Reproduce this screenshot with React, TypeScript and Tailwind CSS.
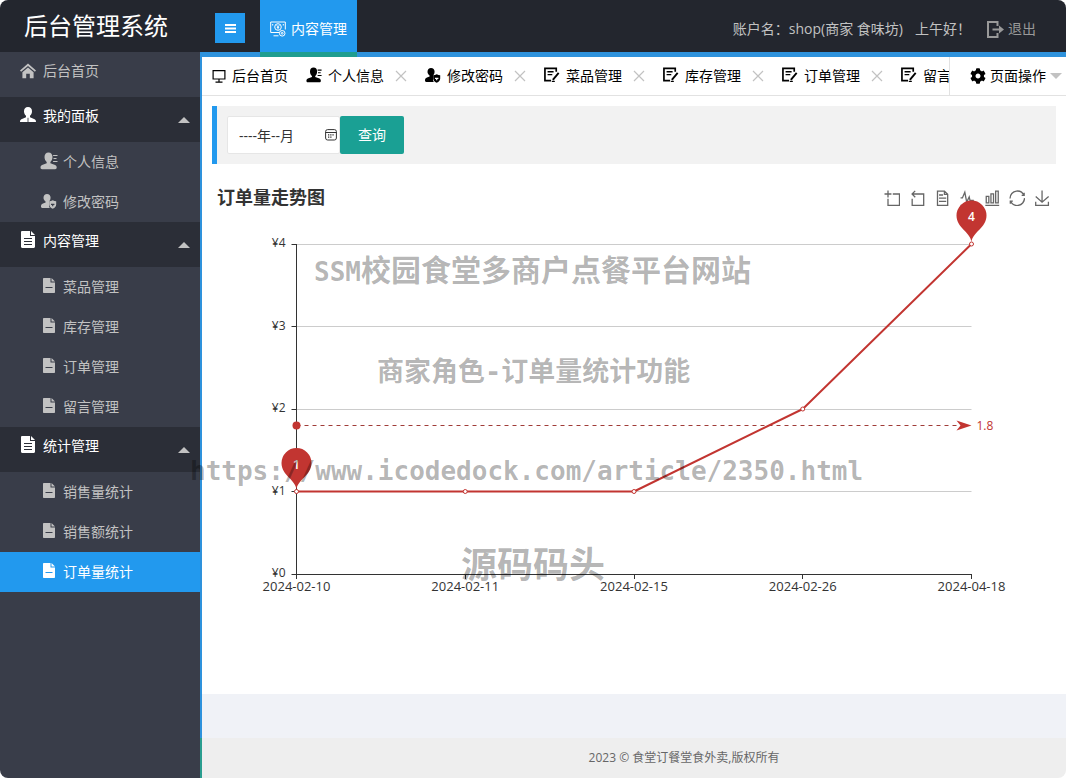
import React from 'react'
import { FaCog } from 'react-icons/fa'

type IconProps = { className?: string }

/* ---------- icons ---------- */

const HomeIcon = ({ className }: IconProps) => (
  <svg viewBox="0 0 16 16" className={className} fill="currentColor" aria-hidden="true">
    <path d="M8 0.6 16 7.6 14.9 8.8 8 2.9 1.1 8.8 0 7.6Z" />
    <path d="M2.4 9.2 8 4.4l5.6 4.8v6H9.8v-4.4H6.2v4.4H2.4z" />
  </svg>
)

const UserIcon = ({ className }: IconProps) => (
  <svg viewBox="0 0 16 16" className={className} fill="currentColor" aria-hidden="true">
    <path d="M8 0c2.6 0 4 1.8 4 4.2 0 2-.9 3.6-2 4.6v1.4l4.6 2c1 .5 1.4 1.2 1.4 2.8H0c0-1.6.4-2.3 1.4-2.8L6 10.2V8.8c-1.1-1-2-2.600-2-4.600C4 1.800 5.400 0 8 0z" />
    <path d="M8 10.800v4.200" stroke="#2b2e37" strokeWidth="0.8" />
  </svg>
)

const ProfileIcon = ({ className }: IconProps) => (
  <svg viewBox="0 0 17 18" className={className} fill="currentColor" aria-hidden="true">
    <path d="M8 0.500c2.500 0 4 1.800 4 4.500 0 2.300-1 4-2.100 5v1.200l4.700 1.700c1.200.500 1.600 1.300 1.600 2.600 0 1.200-.6 1.700-1.600 1.700H1.600C.6 17.200 0 16.700 0 15.500c0-1.300.4-2.100 1.600-2.600l4.600-1.700V10C5 9 4 7.300 4 5 4 2.300 5.500.500 8 .500z" />
    <path d="M12.600 3.500H17M13 6.500h3M12.600 9.500H17" stroke="currentColor" strokeWidth="1.200" />
  </svg>
)

const PasswordIcon = ({ className }: IconProps) => (
  <svg viewBox="0 0 16 16" className={className} fill="currentColor" aria-hidden="true">
    <path d="M6 1c2.200 0 3.600 1.600 3.600 3.800 0 1.300-.4 2.400-1.100 3.200L8 9v4c0 .8.400 1.500.9 2H1.300C.4 15 0 14.500 0 13.600c0-1.800.7-2.500 2-3l2.600-1.100V8.400C3.300 7.600 2.500 6.400 2.500 4.800 2.500 2.600 3.900 1 6 1z" />
    <path
      fillRule="evenodd"
      d="M11.700 7.200c1.200.8 2.300 1.100 3.500 1.100v3.200c0 1.900-1.300 3.200-3.500 4.200-2.200-1-3.500-2.300-3.500-4.200V8.300c1.200 0 2.300-.3 3.500-1.100zm-1.700 3.500v1.300h1.100v1.300h1.200V12h1.100v-1.300z"
    />
  </svg>
)

const FileIcon = ({ className }: IconProps) => (
  <svg viewBox="0 0 14 17" className={className} aria-hidden="true">
    <path fill="currentColor" d="M0 1.200C0 .5.500 0 1.200 0H9v5h5v10.800c0 .7-.5 1.200-1.200 1.200H1.200C.5 17 0 16.500 0 15.800z" />
    <path fill="currentColor" d="M10 0l4 4h-4z" />
    <path d="M3 7.500h8M3 10.500h8M3 13.500h8" stroke="#2b2e37" strokeWidth="1" />
  </svg>
)

const PageIcon = ({ className, line }: IconProps & { line: string }) => (
  <svg viewBox="0 0 12 15" className={className} aria-hidden="true">
    <path fill="currentColor" d="M0 1c0-.6.4-1 1-1h6.500v4.500H12V14c0 .6-.4 1-1 1H1c-.6 0-1-.4-1-1z" />
    <path fill="currentColor" d="M8.500 0 12 3.500H8.500z" />
    <path d="M2.500 9.500h7" stroke={line} strokeWidth="1" />
  </svg>
)

const MonitorIcon = ({ className }: IconProps) => (
  <svg viewBox="0 0 14 14" className={className} fill="none" stroke="currentColor" strokeWidth="1.200" aria-hidden="true">
    <path d="M1.100 1.600h11.800v8.400H1.100zM7 10v3M3.500 13.200h7" />
  </svg>
)

const NoteIcon = ({ className }: IconProps) => (
  <svg viewBox="0 0 17 16" className={className} fill="none" stroke="currentColor" aria-hidden="true">
    <path d="M13 4.500V1H1v13h6.500" strokeWidth="1.800" />
    <path d="M3.800 4.600h6.400M3.800 7.600h5" strokeWidth="1.500" />
    <path d="M15.600 5.800 9.400 13.200" strokeWidth="2" />
    <path d="M8.300 14.800h3.200" strokeWidth="1.300" />
  </svg>
)

const CashIcon = ({ className }: IconProps) => (
  <svg viewBox="0 0 16 16" className={className} fill="none" stroke="currentColor" strokeWidth="1" aria-hidden="true">
    <path d="M9 11.500H.7V1h14.600v7.500" />
    <circle cx="8" cy="6" r="3.300" />
    <path d="M6.700 4.200 8 5.800l1.300-1.600M8 5.800v2.600M6.800 6.300h2.400M2.700 3v1.500M13.300 3v1.500M3.500 14.800h5" />
    <circle cx="12.200" cy="12.300" r="2.800" />
    <circle cx="12.200" cy="12.300" r="0.900" />
  </svg>
)

const ExitIcon = ({ className }: IconProps) => (
  <svg viewBox="0 0 17 17" className={className} fill="none" stroke="currentColor" aria-hidden="true">
    <path d="M10.500 5V1H1v15h9.500v-4" strokeWidth="2" />
    <path d="M5.500 8.500H14" strokeWidth="2" />
    <path d="M12 4.500l5 4-5 4z" fill="currentColor" stroke="none" />
  </svg>
)

const CloseIcon = ({ className }: IconProps) => (
  <svg viewBox="0 0 12 12" className={className} stroke="#c2c2c2" strokeWidth="1.200" aria-hidden="true">
    <path d="M1 1l10 10M11 1 1 11" />
  </svg>
)

const CalendarIcon = ({ className }: IconProps) => (
  <svg viewBox="0 0 12 12" className={className} fill="none" stroke="#333" aria-hidden="true">
    <rect x="0.600" y="0.600" width="10.800" height="10.400" rx="2" />
    <path d="M.6 3.500h10.800" />
    <path d="M3 5.900h6M3 8.200h4" strokeWidth="1.300" strokeDasharray="1.300 .9" />
  </svg>
)

/* ---------- data ---------- */

type MenuItem = { label: string; icon: 'profile' | 'password' | 'page' }

const menu: { title: string; icon: 'user' | 'file'; items: MenuItem[] }[] = [
  {
    title: '我的面板',
    icon: 'user',
    items: [
      { label: '个人信息', icon: 'profile' },
      { label: '修改密码', icon: 'password' },
    ],
  },
  {
    title: '内容管理',
    icon: 'file',
    items: [
      { label: '菜品管理', icon: 'page' },
      { label: '库存管理', icon: 'page' },
      { label: '订单管理', icon: 'page' },
      { label: '留言管理', icon: 'page' },
    ],
  },
  {
    title: '统计管理',
    icon: 'file',
    items: [
      { label: '销售量统计', icon: 'page' },
      { label: '销售额统计', icon: 'page' },
      { label: '订单量统计', icon: 'page' },
    ],
  },
]

const tabs = [
  { label: '个人信息', Icon: ProfileIcon },
  { label: '修改密码', Icon: PasswordIcon },
  { label: '菜品管理', Icon: NoteIcon },
  { label: '库存管理', Icon: NoteIcon },
  { label: '订单管理', Icon: NoteIcon },
  { label: '留言管理', Icon: NoteIcon },
]

const tools = [
  { name: '区域缩放', d: 'M0,13.5h26.9 M13.5,26.9V0 M32.1,13.5H58V58H13.5 V32.1' },
  { name: '区域缩放还原', d: 'M22,1.4L9.9,13.5l12.3,12.3 M10.3,13.5H54.9v44.6 H10.3v-26' },
  { name: '数据视图', d: 'M17.5,17.3H33 M45.4,29.5h-28 M11.5,2v56H51V14.8L38.4,2H11.5z M38.4,2.2v12.7H51 M45.4,41.7h-28' },
  { name: '切换为折线图', d: 'M4.1,28.9h7.1l9.3-22l7.4,38l9.7-19.7l3,12.8h14.9M4.1,58h51.4' },
  { name: '切换为柱状图', d: 'M6.7,22.9h10V48h-10V22.9zM24.9,13h10v35h-10V13zM43.2,2h10v46h-10V2zM3.1,58h53.7' },
  {
    name: '还原',
    d: 'M47,18.9h9.8V8.7 M56.3,20.1 C52.1,9,40.5,0.6,26.8,2.1C12.6,3.7,1.6,16.2,2.1,30.6 M13,41.1H3.1v10.2 M3.7,39.9c4.2,11.1,15.8,19.5,29.5,18 c14.2-1.6,25.2-14.1,24.7-28.5',
  },
  { name: '保存为图片', d: 'M4.7,22.9L29.3,45.5L54.7,23.4M4.6,43.6L4.6,58L53.8,58L53.8,43.6M29.2,45.1L29.2,0' },
]

const orders = [
  { date: '2024-02-10', count: 1 },
  { date: '2024-02-11', count: 1 },
  { date: '2024-02-15', count: 1 },
  { date: '2024-02-26', count: 2 },
  { date: '2024-04-18', count: 4 },
]

/* ---------- layout parts ---------- */

const Header = () => (
  <header className="flex h-[52px] shrink-0 items-stretch bg-[#23262e]">
    <h1 className="flex w-[200px] shrink-0 items-center justify-start pl-6 text-2xl text-white">后台管理系统</h1>
    <div className="flex items-center px-[15px] pt-1">
      <button type="button" aria-label="收起菜单" className="flex size-[30px] items-center justify-center bg-[#2299ee] text-white">
        <svg viewBox="0 0 11 9" className="h-[9px] w-[11px]" fill="currentColor" aria-hidden="true">
          <path d="M0 0h11v2H0zM0 3.500h11v2H0zM0 7h11v2H0z" />
        </svg>
      </button>
    </div>
    <nav className="relative flex">
      <a href="#content" className="flex items-center gap-[5px] bg-[#2299ee] px-2.5 pt-1.5 text-sm text-white">
        <CashIcon className="size-4" />
        内容管理
      </a>
      <span className="absolute inset-x-0 top-full z-10 h-[5px] bg-[#1f9d90]" />
    </nav>
    <div className="ml-auto flex items-center gap-4 pt-1.5 pr-[30px] text-sm text-[#c2c2c2]">
      <div className="flex gap-3">
        <span>账户名：shop(商家 食味坊)</span>
        <span>上午好！</span>
      </div>
      <a href="#logout" className="flex items-center gap-1 text-[#999]">
        <ExitIcon className="size-[17px]" />
        退出
      </a>
    </div>
  </header>
)

const SideIcon = ({ item, active }: { item: MenuItem; active: boolean }) => {
  if (item.icon === 'profile') return <ProfileIcon className="size-[18px]" />
  if (item.icon === 'password') return <PasswordIcon className="size-4" />
  return <PageIcon className="h-[15px] w-3" line={active ? '#2299ee' : '#393d49'} />
}

const Sidebar = () => (
  <aside className="w-[200px] shrink-0 bg-[#393d49] text-sm text-[#c2c2c2]">
    <a href="#home" className="flex h-[45px] items-center gap-[7px] px-5 pb-[7px]">
      <HomeIcon className="size-4" />
      后台首页
    </a>
    {menu.map((group) => (
      <div key={group.title}>
        <button type="button" className="flex h-[45px] w-full items-center bg-[#2b2e37] px-2.5 text-white">
          <span className="flex items-center gap-[7px] pb-[7px] pl-2.5">
            <span className="flex w-4 justify-center pb-[3px]">
              {group.icon === 'user' ? <UserIcon className="size-4" /> : <FileIcon className="h-[17px] w-3.5" />}
            </span>
            {group.title}
          </span>
          <svg viewBox="0 0 12 6" className="ml-auto h-1.5 w-3" fill="#c2c2c2" aria-hidden="true">
            <path d="M6 0l6 6H0z" />
          </svg>
        </button>
        {group.items.map((item) => {
          const active = item.label === '订单量统计'
          return (
            <a
              key={item.label}
              href="#menu"
              className={`flex h-10 items-center gap-[5px] pl-[39px] ${active ? 'bg-[#2299ee] text-white' : ''}`}
            >
              <span className="flex w-[19px] justify-center pb-[3px]">
                <SideIcon item={item} active={active} />
              </span>
              {item.label}
            </a>
          )
        })}
      </div>
    ))}
  </aside>
)

const TabBar = () => (
  <div className="flex h-[39px] border-b border-[#e2e2e2] text-sm text-black">
    <div className="flex min-w-0 flex-1 items-center gap-[18px] overflow-hidden border-r border-[#e2e2e2] pl-2.5">
      <a href="#home" className="flex shrink-0 items-center gap-[6px]">
        <MonitorIcon className="size-3.5" />
        后台首页
      </a>
      {tabs.map(({ label, Icon }) => (
        <div key={label} className="flex shrink-0 items-center">
          <a href="#tab" className="flex items-center gap-[6px]">
            <span className="pb-[3px]">
              <Icon className="size-4" />
            </span>
            {label}
          </a>
          <button type="button" aria-label={`关闭${label}`} className="ml-[11px]">
            <CloseIcon className="size-3" />
          </button>
        </div>
      ))}
    </div>
    <button type="button" className="flex shrink-0 items-center gap-1 pr-1 pl-5">
      <FaCog className="size-4" />
      页面操作
      <svg viewBox="0 0 12 6" className="h-1.5 w-3" fill="#c2c2c2" aria-hidden="true">
        <path d="M0 0h12L6 6z" />
      </svg>
    </button>
  </div>
)

const FilterBar = () => (
  <form
    className="flex border-l-[5px] border-[#2299ee] bg-[#f2f2f2] p-2.5"
    onSubmit={(e) => e.preventDefault()}
  >
    <div className="relative">
      <input
        type="text"
        aria-label="月份"
        defaultValue="----年--月"
        className="h-[38px] w-[113px] rounded-xs border border-[#e6e6e6] bg-white pl-[11px] text-sm text-[#333]"
      />
      <CalendarIcon className="absolute top-[13px] right-[3px] size-3" />
    </div>
    <button type="submit" className="h-[38px] rounded-xs bg-[#1aa094] px-[18px] text-sm text-white">
      查询
    </button>
  </form>
)

const LEFT = 94.5
const STEP = 168.75
const BASE = 354
const UNIT = 82.5

const px = (i: number) => LEFT + i * STEP
const py = (v: number) => BASE - v * UNIT
const crisp = (n: number) => Math.floor(n) + 0.5

const Pin = ({ x, y, value }: { x: number; y: number; value: number }) => (
  <g transform={`translate(${x} ${y})`}>
    <path d="M0 -2C-1 -12 -15 -16 -15 -28.500A15 15 0 1 1 15 -28.500C15 -16 1 -12 0 -2z" fill="#c23531" />
    <text y="-23" textAnchor="middle" fill="#fff" className="text-xs font-semibold">
      {value}
    </text>
  </g>
)

const OrderChart = () => {
  const right = px(orders.length - 1)
  const average = orders.reduce((sum, o) => sum + o.count, 0) / orders.length
  const first = orders[0]
  const last = orders[orders.length - 1]

  return (
    <svg viewBox="0 0 864 474" className="relative block w-full overflow-visible" role="img" aria-label="订单量走势图">
      {[1, 2, 3, 4].map((v) => (
        <path key={v} d={`M${LEFT} ${crisp(py(v))}H${right}`} stroke="#ccc" />
      ))}
      {[0, 1, 2, 3, 4].map((v) => (
        <g key={v}>
          <path d={`M${LEFT - 5} ${crisp(py(v))}h5`} stroke="#333" />
          <text x={LEFT - 11} y={py(v) + 3} textAnchor="end" fill="#333" className="text-xs">
            ¥{v}
          </text>
        </g>
      ))}
      <path d={`M${LEFT} ${py(4)}V${crisp(BASE)}H${right}`} fill="none" stroke="#333" />
      {orders.map((o, i) => (
        <g key={o.date}>
          <path d={`M${crisp(px(i))} ${BASE}v5`} stroke="#333" />
          <text x={px(i)} y={BASE + 17} textAnchor="middle" fill="#333" className="text-[13px]">
            {o.date}
          </text>
        </g>
      ))}

      {/* average line */}
      <path d={`M${LEFT} ${crisp(py(average))}H${right - 12}`} stroke="#a03c38" strokeDasharray="4 4" />
      <circle cx={LEFT} cy={py(average)} r="4" fill="#c23531" />
      <path d={`M${right} ${py(average)}l-15 -5 4 5 -4 5z`} fill="#c23531" />
      <text x={right + 5} y={py(average) + 4} fill="#c23531" className="text-xs">
        {average}
      </text>

      <polyline
        points={orders.map((o, i) => `${px(i)},${py(o.count)}`).join(' ')}
        fill="none"
        stroke="#c23531"
        strokeWidth="2"
        strokeLinejoin="bevel"
      />
      {orders.map((o, i) => (
        <circle key={o.date} cx={px(i)} cy={py(o.count)} r="2" fill="#fff" stroke="#c23531" />
      ))}
      <Pin x={px(0)} y={py(first.count)} value={first.count} />
      <Pin x={right} y={py(last.count)} value={last.count} />

      <g fill="#000" fillOpacity="0.3" className="font-['DejaVu_Sans_Mono','Noto_Sans_CJK_SC',monospace] font-bold">
        <text x="112" y="61" className="text-[30px]">
          <tspan className="text-[26px]">SSM</tspan>校园食堂多商户点餐平台网站
        </text>
        <text x="175" y="161" className="text-[27px]">
          商家角色-订单量统计功能
        </text>
        <text x="-12" y="260" className="text-[26px]">
          https://www.icodedock.com/article/2350.html
        </text>
        <text x="259" y="358" className="text-4xl">
          源码码头
        </text>
      </g>
    </svg>
  )
}

export default function App() {
  return (
    <div className="flex min-h-screen flex-col overflow-hidden rounded-lg bg-white font-['Open_Sans','Noto_Sans_CJK_SC',sans-serif]">
      <Header />
      <div className="flex flex-1">
        <Sidebar />
        <div className="flex min-w-0 flex-1 flex-col border-t-[5px] border-[#2e92dc]">
          <main className="flex flex-1 flex-col border-l-2 border-[#2e92dc] bg-[#f0f2f7]">
            <div className="bg-white">
              <TabBar />
              <div className="p-2.5">
                <FilterBar />
              </div>
              <div className="flex h-[46px] items-center justify-between pr-4 pl-[15px]">
                <h2 className="text-lg font-bold text-[#333]">订单量走势图</h2>
                <div className="flex gap-[9px] pt-0.5">
                  {tools.map((tool) => (
                    <button key={tool.name} type="button" aria-label={tool.name}>
                      <svg viewBox="-2 -2 62 62" className="size-4" fill="none" stroke="#666" strokeWidth="5">
                        <path d={tool.d} />
                      </svg>
                    </button>
                  ))}
                </div>
              </div>
              <OrderChart />
            </div>
          </main>
          <footer className="flex h-10 items-center justify-center border-l-2 border-[#2a9d8f] bg-[#eee] pl-[100px] text-xs text-[#666]">
            2023 © 食堂订餐堂食外卖,版权所有
          </footer>
        </div>
      </div>
    </div>
  )
}
